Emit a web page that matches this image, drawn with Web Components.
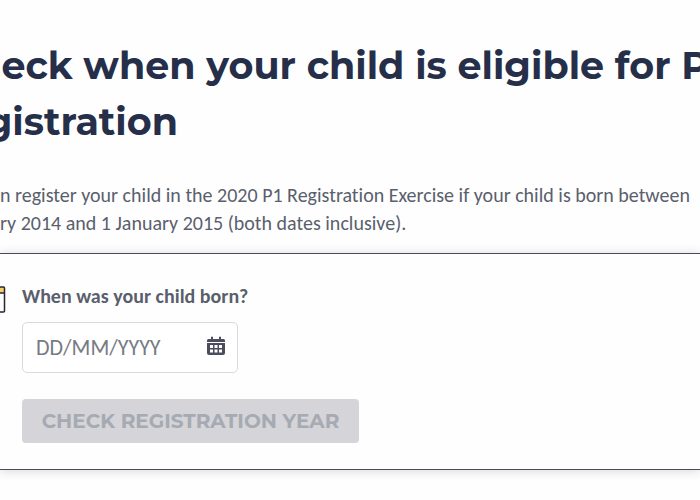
<!DOCTYPE html>
<html lang="en">
<head>
<meta charset="utf-8">
<title>P1 Registration</title>
<style>
html{background:#fefefe}
body{margin:0;overflow-x:hidden;font-family:Carlito,Lato,"Liberation Sans",sans-serif;font-size:20px;line-height:28px;color:#5a5f6d;font-variant-ligatures:none}
</style>
</head>
<body>
<eligibility-page></eligibility-page>
<script>
class PageIntro extends HTMLElement{
  constructor(){
    super();
    this.attachShadow({mode:"open"}).innerHTML=`
<style>
:host{display:block;padding:38px 0 16px}
h1{margin:0 0 31px -25px;color:#262f49;font:700 38px/56px Montserrat,Inter,sans-serif;white-space:nowrap}
p{margin:0;white-space:nowrap}
</style>
<h1><slot name="title"></slot></h1>
<p><slot></slot></p>`;
  }
}
customElements.define("page-intro",PageIntro);

class DateField extends HTMLElement{
  constructor(){
    super();
    this.attachShadow({mode:"open"}).innerHTML=`
<style>
:host{display:grid;gap:12px;justify-items:start}
label{font-weight:700}
.box{display:flex;align-items:center;box-sizing:border-box;width:216px;height:51px;padding:0 12px 0 13px;border:1px solid #d9dade;border-radius:5px;background:#fff}
input{flex:1;min-width:0;padding:0;border:0;outline:0;background:none;font:inherit;font-size:22px;color:inherit}
input::placeholder{color:#777b83;opacity:1}
button{display:flex;padding:0 0 4px;border:0;background:none;color:#4a4d5e}
svg{width:18px;height:20px}
</style>
<label for="date"><slot></slot></label>
<div class="box">
<input id="date" type="text" placeholder="DD/MM/YYYY">
<button type="button" aria-label="Open calendar"><svg viewBox="0 0 18 20" fill="currentColor"><path fill-rule="evenodd" d="M4 1q1-1 2 0v2h6V1q1-1 2 0v2h2.500q1.500 0 1.500 1.500V6H0V4.500Q0 3 1.500 3H4zM0 7h18v10q0 2-2 2H2q-2 0-2-2zM3 9v3h3V9zM7.500 9v3h3V9zM12 9v3h3V9zM3 13.500v3h3v-3zM7.500 13.500v3h3v-3zM12 13.500v3h3v-3z"/></svg></button>
</div>`;
  }
}
customElements.define("date-field",DateField);

class EligibilityCard extends HTMLElement{
  constructor(){
    super();
    this.attachShadow({mode:"open"}).innerHTML=`
<style>
:host{display:flex;gap:16px;align-items:flex-start;padding:28px 0 26px;border:solid #474a61;border-width:1px 0;background:#fefefe;box-shadow:0 1px 10px rgba(60,60,70,.2)}
svg{flex:none;width:6px;height:36px}
form{display:grid;gap:26px;justify-items:start;margin:0}
button{min-width:337px;min-height:44px;padding:0 17px;border:0;border-radius:4px;background:#d4d4d9;color:#a6aab3;font:700 20px/28px Montserrat,Inter,sans-serif;text-transform:uppercase}
</style>
<svg viewBox="0 0 6 36" aria-hidden="true"><path d="M0 5h4v6H0z" fill="#f7cf6a"/><path d="M0 5h3.500q1 0 1 1v23q0 1-1 1H0M0 11h4.500" fill="none" stroke="#252733" stroke-width="1.500"/></svg>
<form><date-field>When was your child born?</date-field><button type="button" disabled>Check registration year</button></form>`;
  }
}
customElements.define("eligibility-card",EligibilityCard);

class EligibilityPage extends HTMLElement{
  constructor(){
    super();
    this.attachShadow({mode:"open"}).innerHTML=`
<style>:host{display:block;overflow:hidden;padding-bottom:16px}</style>
<main>
<page-intro><span slot="title">heck when your child is eligible for P<br>&nbsp;gistration</span>n register your child in the 2020 P1 Registration Exercise if your child is born between<br>ry 2014 and 1 January 2015 (both dates inclusive).</page-intro>
<eligibility-card></eligibility-card>
</main>`;
  }
}
customElements.define("eligibility-page",EligibilityPage);
</script>
</body>
</html>
